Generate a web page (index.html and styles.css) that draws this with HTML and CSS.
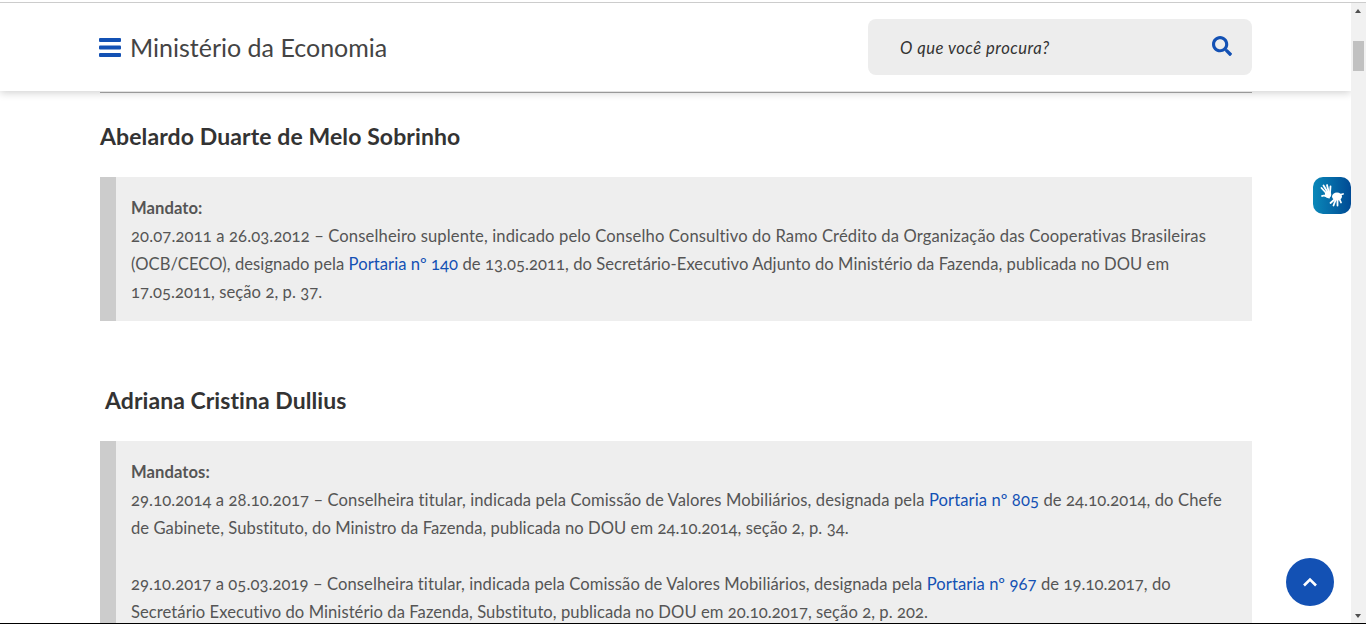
FILE: index.html
```html
<!DOCTYPE html>
<html lang="pt-BR">
<head>
    <meta charset="UTF-8">
    <meta name="viewport" content="width=device-width, initial-scale=1.0">
    <title>Ministério da Economia</title>
    <link rel="stylesheet" href="styles.css">
</head>
<body>
    <div class="window">
        <div class="page">
            <header class="site-header">
                <div class="brand">
                    <svg class="menu-icon" viewBox="0 0 22 19"><rect y="0" width="22" height="4" rx="1"/><rect y="7.5" width="22" height="4" rx="1"/><rect y="15" width="22" height="4" rx="1"/></svg>
                    <span class="brand-name">Ministério da Economia</span>
                </div>
                <div class="search">
                    <span class="search-text">O que você procura?</span>
                    <svg class="search-icon" viewBox="0 0 512 512"><path d="M505 442.7L405.3 343c-4.5-4.5-10.6-7-17-7H372c27.6-35.3 44-79.7 44-128C416 93.1 322.9 0 208 0S0 93.1 0 208s93.1 208 208 208c48.3 0 92.7-16.4 128-44v16.3c0 6.4 2.5 12.5 7 17l99.7 99.7c9.4 9.4 24.6 9.4 33.9 0l28.3-28.3c9.4-9.4 9.4-24.6.1-34zM208 336c-70.7 0-128-57.2-128-128 0-70.7 57.2-128 128-128 70.7 0 128 57.2 128 128 0 70.7-57.2 128-128 128z"/></svg>
                </div>
            </header>

            <main class="content">
                <hr class="rule">

                <h2 class="person">Abelardo Duarte de Melo Sobrinho</h2>
                <div class="note">
                    <strong>Mandato:</strong><br>
                    <span class="l1">20.07.2011 a 26.03.2012 – Conselheiro suplente, indicado pelo Conselho Consultivo do Ramo Crédito da Organização das Cooperativas Brasileiras</span><br>
                    (OCB/CECO), designado pela <a href="#">Portaria nº 140</a> de 13.05.2011, do Secretário-Executivo Adjunto do Ministério da Fazenda, publicada no DOU em<br>
                    17.05.2011, seção 2, p. 37.
                </div>

                <h2 class="person person-second">Adriana Cristina Dullius</h2>
                <div class="note">
                    <strong>Mandatos:</strong><br>
                    <span class="l3">29.10.2014 a 28.10.2017 – Conselheira titular, indicada pela Comissão de Valores Mobiliários, designada pela <a href="#">Portaria nº 805</a> de 24.10.2014, do Chefe</span><br>
                    de Gabinete, Substituto, do Ministro da Fazenda, publicada no DOU em 24.10.2014, seção 2, p. 34.<br>
                    <br>
                    <span class="l4">29.10.2017 a 05.03.2019 – Conselheira titular, indicada pela Comissão de Valores Mobiliários, designada pela <a href="#">Portaria nº 967</a> de 19.10.2017, do</span><br>
                    Secretário Executivo do Ministério da Fazenda, Substituto, publicada no DOU em 20.10.2017, seção 2, p. 202.
                </div>
            </main>

            <a class="libras" href="#">
                <svg viewBox="0 0 38 37">
                    <g class="hand-back">
                        <line x1="14" y1="17" x2="8.500" y2="11"/>
                        <line x1="15" y1="16" x2="10.500" y2="8.500"/>
                        <line x1="16" y1="16" x2="14" y2="8"/>
                        <line x1="17" y1="16" x2="17.500" y2="9.500"/>
                        <path d="M9 19c2-1.500 4 0 7 1.500" />
                    </g>
                    <circle class="palm" cx="15" cy="17.500" r="3.200"/>
                    <g class="hand-front">
                        <line x1="22" y1="22" x2="17.500" y2="26"/>
                        <line x1="23" y1="22" x2="20.500" y2="28.500"/>
                        <line x1="24.500" y1="22" x2="24.500" y2="28.500"/>
                        <line x1="26" y1="21" x2="28" y2="25.500"/>
                        <line x1="26" y1="18" x2="30" y2="17"/>
                    </g>
                    <ellipse class="palm" cx="24" cy="19.500" rx="5" ry="4"/>
                </svg>
            </a>
            <a class="back-top" href="#">
                <svg viewBox="0 0 16 10"><polyline points="2,8.500 8,2.500 14,8.500"/></svg>
            </a>
        </div>

        <div class="scrollbar">
            <span class="arrow arrow-up"></span>
            <span class="thumb"></span>
            <span class="arrow arrow-down"></span>
        </div>
    </div>
</body>
</html>
```

FILE: styles.css
```css
html, body {
    margin: 0;
    height: 100%;
    overflow: hidden;
}
body {
    background-color: #fff;
    font-family: Lato, "Open Sans", sans-serif;
    color: #555;
    padding-top: 2px;
    box-sizing: border-box;
}
.window {
    display: flex;
    height: 622px;
    box-sizing: border-box;
    border-top: 1px solid #ccc;
    border-bottom: 1px solid #000;
}
.page {
    flex: 1;
    min-width: 0;
    overflow: hidden;
}

/* header */
.site-header {
    position: relative;
    z-index: 2;
    height: 88px;
    display: flex;
    align-items: center;
    justify-content: space-between;
    padding: 0 99px 0 99px;
    background-color: #fff;
    box-shadow: 0 2px 8px rgba(0, 0, 0, 0.18);
}
.brand {
    display: flex;
    align-items: center;
    gap: 9px;
}
.menu-icon {
    width: 22px;
    height: 19px;
    fill: #1351b4;
}
.brand-name {
    font-size: 25px;
    color: #444;
}
.search {
    width: 384px;
    height: 56px;
    display: flex;
    align-items: center;
    justify-content: space-between;
    padding: 0 20px 0 32px;
    box-sizing: border-box;
    background-color: #ededed;
    border-radius: 8px;
}
.search-text {
    padding-top: 2px;
    font-size: 16.6px;
    font-style: italic;
    color: #333;
    letter-spacing: 0.5px;
}
.search-icon {
    width: 20px;
    height: 20px;
    fill: #1351b4;
    margin-top: -2px;
}

/* content */
.content {
    padding: 0 99px 0 100px;
}
.rule {
    margin: 1px 0 0;
    border: 0;
    border-top: 1px solid #aaa;
}
.person {
    margin: 29px 0 27px;
    font-size: 23px;
    line-height: 28px;
    font-weight: 700;
    color: #333;
    letter-spacing: 0.1px;
}
.person-second {
    margin: 65px 0 27px 5px;
    letter-spacing: 0.05px;
}
.note {
    padding: 17px 16px 15px 15px;
    border-left: 16px solid #ccc;
    background-color: #eee;
    font-size: 16.6px;
    line-height: 28px;
    white-space: nowrap;
    font-variant-numeric: oldstyle-nums;
    letter-spacing: 0.06px;
}
.note strong {
    color: #555;
}
.note a {
    color: #1351b4;
    text-decoration: none;
}
.l1 {
    letter-spacing: 0.13px;
}
.l3 {
    letter-spacing: 0.1px;
}
.l4 {
    letter-spacing: 0.08px;
}

/* floating buttons */
.libras {
    position: absolute;
    left: 1313px;
    top: 177px;
    width: 38px;
    height: 37px;
    border-radius: 10px;
    background: linear-gradient(90deg, #0a88b9, #004a94);
}
.libras svg {
    display: block;
    width: 38px;
    height: 37px;
}
.palm {
    fill: #fff;
}
.hand-back, .hand-front {
    fill: none;
    stroke: #fff;
    stroke-width: 1.8;
    stroke-linecap: round;
}
.back-top {
    position: absolute;
    left: 1286px;
    top: 558px;
    width: 48px;
    height: 48px;
    display: flex;
    align-items: center;
    justify-content: center;
    border-radius: 50%;
    background-color: #1351b4;
}
.back-top svg {
    width: 16px;
    height: 10px;
    fill: none;
    stroke: #fff;
    stroke-width: 2.6;
}

/* fake scrollbar */
.scrollbar {
    position: relative;
    width: 15px;
    background-color: #f1f1f1;
}
.arrow {
    position: absolute;
    left: 4px;
    width: 0;
    height: 0;
    border-left: 3.5px solid transparent;
    border-right: 3.5px solid transparent;
}
.arrow-up {
    top: 6px;
    border-bottom: 4px solid #505050;
}
.arrow-down {
    bottom: 5px;
    border-top: 4px solid #505050;
}
.thumb {
    position: absolute;
    left: 2px;
    right: 2px;
    top: 38px;
    height: 30px;
    background-color: #c1c1c1;
}
```
